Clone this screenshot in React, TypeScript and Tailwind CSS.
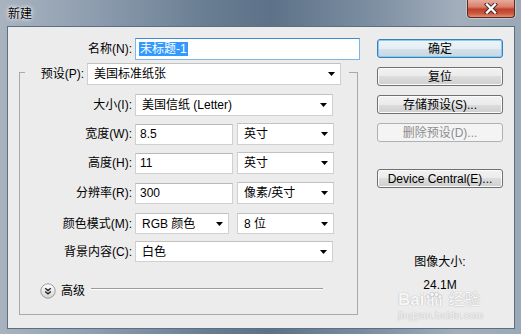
import React from 'react'

// small black dropdown triangle
const Arrow = () => (
  <svg width="7" height="4" viewBox="0 0 7 4" className="shrink-0">
    <path d="M0 0h7L3.5 4z" fill="#000" />
  </svg>
)

const Select = ({ text, className = '' }: { text: string; className?: string }) => (
  <div className={`flex items-center justify-between bg-white border border-[#d0d0d0] border-t-[#c2c2c2] pl-[6px] pr-[5px] whitespace-nowrap ${className}`}>
    <span>{text}</span>
    <Arrow />
  </div>
)

const Field = ({ value, className = '' }: { value: string; className?: string }) => (
  <div className={`flex items-center bg-white border border-[#d0d0d0] border-t-[#b8b8b8] pl-[4px] ${className}`}>
    {value}
  </div>
)

const Row = ({ label, className = '', children }: { label: string; className?: string; children: React.ReactNode }) => (
  <div className={`flex items-center ${className}`}>
    <div className="w-[115px] pr-[3px] text-right whitespace-nowrap">{label}</div>
    {children}
  </div>
)

const Btn = ({ children, variant = 'normal', className = '' }: { children: React.ReactNode; variant?: 'normal' | 'default' | 'disabled'; className?: string }) => {
  const styles = {
    normal: 'border-[#707070] bg-[linear-gradient(#f2f2f2_0%,#ebebeb_50%,#dddddd_50%,#cfcfcf_100%)] shadow-[inset_0_0_0_1px_#fbfbfb] text-black',
    default: 'border-[#3c7fb1] bg-[linear-gradient(#eef4f8_0%,#e6eef4_50%,#d6e1ea_50%,#c8d6e2_100%)] shadow-[inset_0_0_0_1px_#7fcff8] text-black',
    disabled: 'border-[#adb2b5] bg-[#f4f4f4] text-[#8d8d8d]'
  }[variant]
  return (
    <div className={`h-[19px] flex items-center justify-center border rounded-[3px] whitespace-nowrap ${styles} ${className}`}>
      {children}
    </div>
  )
}

const AdvancedIcon = () => (
  <svg width="16" height="16" viewBox="0 0 16 16">
    <defs>
      <linearGradient id="adv" x1="0" y1="0" x2="0" y2="1">
        <stop offset="0" stopColor="#ffffff" />
        <stop offset="1" stopColor="#d4d4d4" />
      </linearGradient>
    </defs>
    <circle cx="8" cy="8" r="7.2" fill="url(#adv)" stroke="#9c9c9c" />
    <path d="M5.2 5.2L8 7.6L10.8 5.2M5.2 8.4L8 10.8L10.8 8.4" fill="none" stroke="#202020" strokeWidth="1.3" />
  </svg>
)

export default function App() {
  return (
    <div className="w-[521px] h-[334px] flex flex-col overflow-hidden text-[12px] leading-[14px] text-black [font-family:'Liberation_Sans','Noto_Sans_CJK_SC',sans-serif] bg-[linear-gradient(90deg,#a8b3bf_0%,#8e9daf_18%,#687d92_40%,#5d7288_52%,#7a8ca0_70%,#a2aebb_88%,#9ba8b6_100%)] relative">
      {/* Title bar */}
      <div className="h-[26px] flex items-start justify-between shrink-0">
        <span className="ml-[8px] mt-[7px] [text-shadow:0_0_6px_#ffffff,0_0_3px_#ffffff]">新建</span>
        <div className="mr-[6px] w-[48px] h-[18px] flex items-center justify-center rounded-b-[4px] border border-t-0 border-[#5b2a22] bg-[linear-gradient(#e8aa9b_0%,#d8806c_40%,#c13f28_55%,#cb5a40_80%,#e29177_100%)] shadow-[0_0_0_1px_rgba(255,255,255,0.35)]">
          <svg width="14" height="11" viewBox="0 0 14 11">
            <path d="M3 1.5L11 9.5M11 1.5L3 9.5" stroke="#3b2a28" strokeWidth="4.2" strokeLinecap="square" />
            <path d="M3 1.5L11 9.5M11 1.5L3 9.5" stroke="#ffffff" strokeWidth="2.4" strokeLinecap="square" />
          </svg>
        </div>
      </div>

      {/* Client area */}
      <div className="ml-[7px] mr-[6px] mb-[5px] flex-1 flex border border-[#5c6e82] bg-[#ececec]">
        {/* Left form column */}
        <div className="w-[369px] flex flex-col">
          <div className="mt-[11px] flex items-center">
            <div className="w-[127px] pr-[3px] text-right whitespace-nowrap">名称(N):</div>
            <div className="w-[225px] h-[22px] flex items-center bg-white border border-[#7fb4e6] border-t-[#3f8bd6] pl-[3px]">
              <span className="bg-[#3399ff] text-white px-px">未标题-1</span>
            </div>
          </div>

          <div className="ml-[11px] mt-[12px] w-[339px] h-[243px] flex flex-col border border-[#a9a9a9]">
            <div className="-mt-[10px] ml-[5px] self-start h-[22px] flex items-center bg-[#ececec] pl-[13px] pr-[8px]">
              <span className="w-[49px] pr-[3px] text-right whitespace-nowrap">预设(P):</span>
              <Select text="美国标准纸张" className="w-[254px] h-[22px]" />
            </div>

            <Row label="大小(I):" className="mt-[9px]">
              <Select text="美国信纸 (Letter)" className="w-[198px] h-[22px]" />
            </Row>
            <Row label="宽度(W):" className="mt-[7px]">
              <Field value="8.5" className="w-[98px] h-[21px]" />
              <Select text="英寸" className="ml-[4px] w-[97px] h-[22px]" />
            </Row>
            <Row label="高度(H):" className="mt-[7px]">
              <Field value="11" className="w-[98px] h-[21px]" />
              <Select text="英寸" className="ml-[4px] w-[97px] h-[22px]" />
            </Row>
            <Row label="分辨率(R):" className="mt-[8px]">
              <Field value="300" className="w-[98px] h-[21px]" />
              <Select text="像素/英寸" className="ml-[4px] w-[97px] h-[22px]" />
            </Row>
            <Row label="颜色模式(M):" className="mt-[9px]">
              <Select text="RGB 颜色" className="w-[94px] h-[21px]" />
              <Select text="8 位" className="ml-[8px] w-[97px] h-[21px]" />
            </Row>
            <Row label="背景内容(C):" className="mt-[7px]">
              <Select text="白色" className="w-[198px] h-[21px]" />
            </Row>

            <div className="mt-[21px] ml-[20px] flex items-center">
              <AdvancedIcon />
              <span className="ml-[5px]">高级</span>
              <div className="ml-[6px] w-[232px] h-[2px] -mt-[4px] border-t border-[#9a9a9a] border-b border-b-white" />
            </div>
          </div>
        </div>

        {/* Right button column */}
        <div className="w-[126px] mt-[12px] flex flex-col">
          <Btn variant="default">确定</Btn>
          <Btn className="mt-[9px]">复位</Btn>
          <Btn className="mt-[9px]">存储预设(S)...</Btn>
          <Btn variant="disabled" className="mt-[9px]">删除预设(D)...</Btn>
          <Btn className="mt-[27px]">Device Central(E)...</Btn>
          <div className="mt-[67px] text-center">图像大小:</div>
          <div className="mt-[9px] text-center">24.1M</div>
        </div>
      </div>

      {/* Baidu watermark overlay */}
      <div className="absolute left-[398px] top-[291px] flex flex-col items-start text-[#f7f7f7] [text-shadow:0_0_1px_#b9b9b9,0_0_1px_#b9b9b9] pointer-events-none">
        <div className="flex items-end font-bold text-[17px] leading-[17px]">
          <span>Bai</span>
          <span className="relative flex items-end">
            <svg width="20" height="17" viewBox="0 0 20 17" className="absolute left-0 top-[-3px]">
              <g fill="#f7f7f7" stroke="#c4c4c4" strokeWidth="0.8">
                <ellipse cx="4" cy="5" rx="2" ry="2.5" />
                <ellipse cx="8" cy="2.5" rx="2" ry="2.3" />
                <ellipse cx="12.5" cy="2.5" rx="2" ry="2.3" />
                <ellipse cx="16" cy="5" rx="2" ry="2.5" />
              </g>
            </svg>
            <span className="relative text-[13px] leading-[13px] ml-[2px]">du</span>
          </span>
          <span className="ml-[6px] text-[16px] font-normal">经验</span>
        </div>
        <div className="mt-[3px] text-[10px] leading-[10px] tracking-[0.3px]">jingyan.baidu.com</div>
      </div>
    </div>
  )
}
